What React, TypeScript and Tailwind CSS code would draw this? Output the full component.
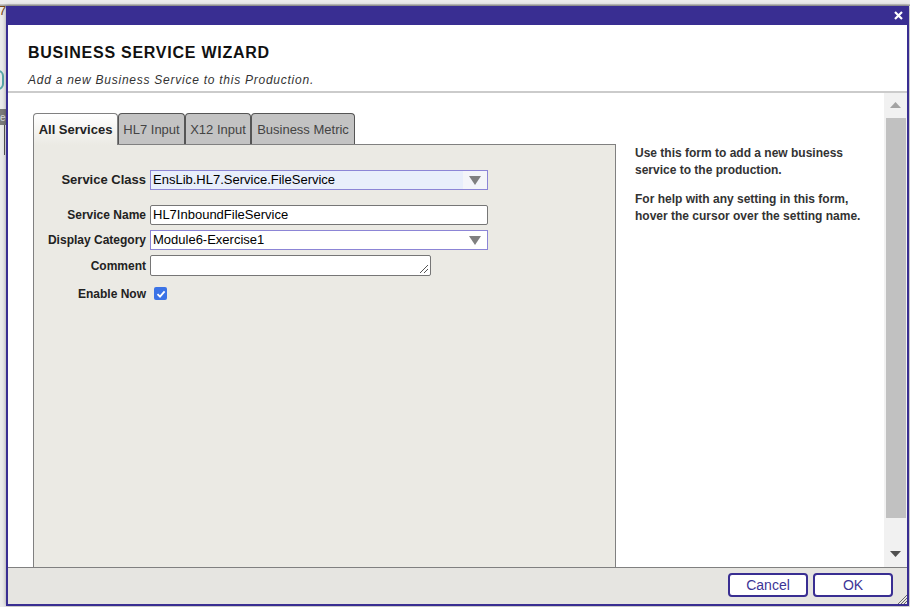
const labelCls = 'w-[112px] shrink-0 text-right text-[12px] font-bold text-[#222]'

function Arrow({ color = '#808080' }: { color?: string }) {
  return (
    <svg width="12" height="9" viewBox="0 0 12 9">
      <polygon points="0,0 12,0 6,9" fill={color} />
    </svg>
  )
}

function Tab({ label, active, w }: { label: string; active?: boolean; w: string }) {
  if (active) {
    return (
      <div
        className={`${w} relative z-10 -mb-px flex h-[32px] items-center justify-center rounded-t-[4px] border border-b-0 border-[#808080] bg-gradient-to-b from-white to-[#ebeae4] text-[13px] font-bold text-[#222]`}
      >
        {label}
      </div>
    )
  }
  return (
    <div
      className={`${w} flex h-[31px] items-center justify-center rounded-t-[4px] border border-b-0 border-[#555] bg-[#c3c3c3] pt-px text-[13px] text-[#444]`}
    >
      {label}
    </div>
  )
}

function ServiceForm() {
  return (
    <div className="flex flex-col pt-[25px]">
      {/* Service Class */}
      <div className="flex h-[20px] items-center">
        <span className="w-[112px] shrink-0 text-right text-[13px] font-bold text-[#222]">Service Class</span>
        <div className="ml-[4px] flex h-[20px] w-[338px] border border-[#8c85d6] bg-[#f4f5f9]">
          <div className="flex flex-1 items-center bg-[#e8eefb] pl-[2px] text-[13px] text-black">
            EnsLib.HL7.Service.FileService
          </div>
          <div className="flex w-[24px] items-center justify-center">
            <Arrow />
          </div>
        </div>
      </div>

      {/* Service Name */}
      <div className="mt-[15px] flex h-[20px] items-center">
        <span className={labelCls}>Service Name</span>
        <div className="ml-[4px] flex h-[20px] w-[338px] items-center rounded-[2px] border border-[#767676] bg-white pl-[2px] text-[13px] text-black">
          HL7InboundFileService
        </div>
      </div>

      {/* Display Category */}
      <div className="mt-[5px] flex h-[20px] items-center">
        <span className={labelCls}>Display Category</span>
        <div className="ml-[4px] flex h-[20px] w-[338px] border border-[#8c85d6] bg-white">
          <div className="flex flex-1 items-center pl-[2px] text-[13px] text-black">Module6-Exercise1</div>
          <div className="flex w-[24px] items-center justify-center">
            <Arrow />
          </div>
        </div>
      </div>

      {/* Comment */}
      <div className="mt-[5px] flex h-[21px] items-start">
        <span className={`${labelCls} pt-[2px]`}>Comment</span>
        <div className="relative ml-[4px] h-[21px] w-[281px] rounded-[2px] border border-[#767676] bg-white">
          <svg className="absolute bottom-[1px] right-[1px]" width="10" height="10" viewBox="0 0 10 10">
            <line x1="1" y1="9" x2="9" y2="1" stroke="#555" strokeWidth="1" />
            <line x1="5" y1="9" x2="9" y2="5" stroke="#555" strokeWidth="1" />
          </svg>
        </div>
      </div>

      {/* Enable Now */}
      <div className="mt-[11px] flex h-[13px] items-center">
        <span className={labelCls}>Enable Now</span>
        <div className="ml-[8px] flex h-[13px] w-[13px] items-center justify-center rounded-[2px] bg-[#3b73e6]">
          <svg width="10" height="10" viewBox="0 0 10 10">
            <path d="M1.5 5.2 L4 7.6 L8.6 2.4" fill="none" stroke="white" strokeWidth="1.8" />
          </svg>
        </div>
      </div>
    </div>
  )
}

function Scrollbar() {
  return (
    <div className="flex w-[23px] shrink-0 flex-col bg-[#f1f1f1]">
      <div className="flex h-[24px] items-center justify-center">
        <svg width="11" height="6" viewBox="0 0 11 6">
          <polygon points="0,6 11,6 5.5,0" fill="#a3a3a3" />
        </svg>
      </div>
      <div className="ml-[2px] mr-[1px] mt-[1px] h-[400px] bg-[#c1c1c1]" />
      <div className="flex-1" />
      <div className="flex h-[26px] items-center justify-center pb-[1px]">
        <svg width="11" height="6" viewBox="0 0 11 6">
          <polygon points="0,0 11,0 5.5,6" fill="#505050" />
        </svg>
      </div>
    </div>
  )
}

export default function App() {
  return (
    <div className="relative h-[607px] w-[910px] overflow-hidden bg-[#ebebeb] font-['Liberation_Sans',Arial,sans-serif]">
      {/* page behind the dialog */}
      <div className="absolute left-0 top-[4px] h-[2px] w-full bg-gradient-to-b from-[#d0d0d0] to-[#9a9a9a]" />
      <span className="absolute left-[-1px] top-[4px] text-[13px] leading-[13px] text-[#7a4a1a]">7</span>
      <div className="absolute left-[-8px] top-[70px] h-[20px] w-[12px] rounded-full border-2 border-[#58a9a9]" />
      <div className="absolute left-0 top-[109px] flex h-[16px] w-[8px] items-center bg-[#7a7a7a] text-[10px] text-[#ddd]">
        ec
      </div>
      <div className="absolute left-[4px] top-[125px] h-[30px] w-px bg-[#555]" />

      {/* dialog */}
      <div className="absolute left-[6px] top-[6px] flex h-[600px] w-[903px] flex-col bg-[#392e92] px-[2px] pb-[2px] shadow-[0_0_4px_rgba(0,0,0,0.35)]">
        <div className="flex h-[19px] shrink-0 items-center justify-end pr-[4px]">
          <svg width="9" height="9" viewBox="0 0 9 9">
            <path d="M1 1 L8 8 M8 1 L1 8" stroke="white" strokeWidth="2.2" />
          </svg>
        </div>

        <div className="flex flex-1 flex-col overflow-hidden bg-white">
          {/* header */}
          <div className="h-[68px] shrink-0 border-b-2 border-[#cbcbcb] pl-[20px] pt-[18px]">
            <div className="text-[16px] font-bold leading-[20px] tracking-[0.75px] text-[#111]">
              BUSINESS SERVICE WIZARD
            </div>
            <div className="mt-[9px] text-[12px] italic leading-[16px] tracking-[0.75px] text-[#333]">
              Add a new Business Service to this Production.
            </div>
          </div>

          {/* body */}
          <div className="flex h-[474px] shrink-0">
            <div className="flex flex-1 overflow-hidden pl-[25px] pt-[20px]">
              <div className="flex w-[583px] shrink-0 flex-col">
                <div className="flex h-[31px] items-end">
                  <Tab label="All Services" active w="w-[85px]" />
                  <Tab label="HL7 Input" w="w-[67px]" />
                  <Tab label="X12 Input" w="w-[66px]" />
                  <Tab label="Business Metric" w="w-[104px]" />
                </div>
                <div className="h-[460px] shrink-0 border border-[#808080] bg-[#ebeae4]">
                  <ServiceForm />
                </div>
              </div>
              <div className="ml-[19px] mt-[32px] w-[236px] text-[12px] font-bold leading-[17px] text-[#333]">
                <p>Use this form to add a new business service to the production.</p>
                <p className="mt-[12px]">For help with any setting in this form, hover the cursor over the setting name.</p>
              </div>
            </div>
            <Scrollbar />
          </div>

          {/* footer */}
          <div className="relative flex flex-1 items-start justify-end gap-[5px] border-t border-[#808080] bg-[#e6e5e1] pr-[14px] pt-[5px]">
            <button className="flex h-[24px] w-[80px] items-center justify-center rounded-[4px] border-2 border-[#392e92] bg-white text-[14px] text-[#3d3596]">
              Cancel
            </button>
            <button className="flex h-[24px] w-[80px] items-center justify-center rounded-[4px] border-2 border-[#392e92] bg-white text-[14px] text-[#3d3596]">
              OK
            </button>
            <svg className="absolute bottom-0 right-0" width="10" height="10" viewBox="0 0 10 10">
              <line x1="1" y1="10" x2="10" y2="1" stroke="#666" strokeWidth="1" />
              <line x1="4" y1="10" x2="10" y2="4" stroke="#666" strokeWidth="1" />
              <line x1="7" y1="10" x2="10" y2="7" stroke="#666" strokeWidth="1" />
            </svg>
          </div>
        </div>
      </div>
    </div>
  )
}
